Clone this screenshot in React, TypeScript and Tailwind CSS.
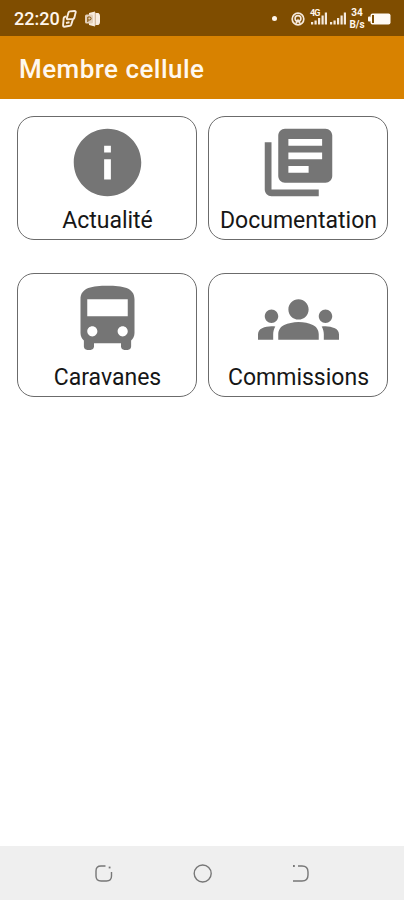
import type { IconType } from 'react-icons';
import { MdInfo, MdLibraryBooks, MdDirectionsBus, MdGroups } from 'react-icons/md';

const cards: { label: string; icon: IconType }[] = [
  { label: 'Actualité', icon: MdInfo },
  { label: 'Documentation', icon: MdLibraryBooks },
  { label: 'Caravanes', icon: MdDirectionsBus },
  { label: 'Commissions', icon: MdGroups },
];

function Signal() {
  return (
    <svg width="16" height="13" viewBox="0 0 16 13" fill="#f5e9dc">
      <rect x="0" y="10" width="2.2" height="2.5" />
      <rect x="3.5" y="8.5" width="2.2" height="4" />
      <rect x="7" y="6" width="2.2" height="6.5" />
      <rect x="10.5" y="3.5" width="2.2" height="9" />
      <rect x="13.8" y="0.5" width="2.2" height="12" />
    </svg>
  );
}

function StatusBar() {
  return (
    <div className="flex h-9 items-center bg-[#7f4d00] pl-[14px] pr-[13px] pt-px text-[#fff6ec]">
      <span className="w-[48px] pt-px text-[18px] font-medium leading-none">22:20</span>
      <svg width="15" height="18" viewBox="0 0 15 18" fill="none" stroke="#f8ecdf" strokeWidth="1.9">
        <path d="M5.5 6 6.5 2.6Q6.800 1.500 8 1.400L12.500 1Q14 1 13.700 2.200L12.400 7.600Q12 8.800 11 8.900L5.800 9.300Q4.600 9.200 4.900 8Z" />
        <path d="M4.300 6.300 2.800 6.800Q1.800 7.200 1.700 8.200L1.100 15Q1 16.800 2.400 16.700L7.800 15.800Q8.800 15.600 9.200 14.600L11 9" />
        <path d="M4 13 7.500 12.300" />
      </svg>
      <svg className="ml-[8px]" width="16" height="16" viewBox="0 0 16 16">
        <path d="M4 2 10 0.5V15.5L4 14Z" fill="#f8ecdf" />
        <path d="M10 2h3.5Q15 3 15 5v6q0 2-1.5 3H10Z" fill="#f8ecdf" />
        <rect x="0" y="3.5" width="8" height="9" rx="1.5" fill="#e3d0bb" />
        <path d="M2.8 11v-5h1.8a1.5 1.5 0 0 1 0 3h-1.8" fill="none" stroke="#7f4d00" />
        <path d="M10.3 1v14" stroke="#b99468" strokeWidth="0.7" />
      </svg>
      <div className="ml-auto flex items-center">
        <span className="mr-[14px] size-[5px] rounded-full bg-[#fff6ec]" />
        <svg className="mr-[6px]" width="14" height="14" viewBox="0 0 14 14" fill="none" stroke="#f5e9dc">
          <circle cx="7" cy="7" r="5.8" strokeWidth="1.7" />
          <circle cx="7" cy="6.5" r="2.9" strokeWidth="1.6" />
          <path d="M5 11.5 7 8l2 3.5" strokeWidth="1.6" />
        </svg>
        <div className="relative mr-[3px]">
          <Signal />
          <span className="absolute -left-px -top-[3px] bg-[#7f4d00] pr-px text-[9px] font-bold leading-[8px] tracking-[-0.8px]">4G</span>
        </div>
        <Signal />
        <div className="ml-[3px] w-[16px] text-center text-[10px] font-bold leading-[12px] tracking-[-0.1px]">
          <div>34</div>
          <div>B/s</div>
        </div>
        <svg className="ml-[3px]" width="23" height="12" viewBox="0 0 23 12" fill="#fffaf4">
          <rect x="0" y="3.5" width="3" height="5" rx="1" />
          <rect x="2.5" y="0.5" width="20" height="11" rx="2" />
          <rect x="4" y="2" width="2" height="8" fill="#7f4d00" />
        </svg>
      </div>
    </div>
  );
}

function MenuCard({ label, icon: Icon }: { label: string; icon: IconType }) {
  return (
    <button className="flex h-[124px] flex-col items-center rounded-[17px] border border-[#6b6b6b] pl-px pt-[5px]">
      <Icon className="size-[81px] shrink-0 text-[#757575]" />
      <span className="mt-[4px] whitespace-nowrap text-[23px] leading-[28px] text-[#161616]">{label}</span>
    </button>
  );
}

function NavBar() {
  return (
    <div className="flex h-[54px] items-center justify-between bg-[#efefef] pl-[94px] pr-[93px] pt-px">
      <svg width="20" height="20" viewBox="0 0 20 20" fill="none" stroke="#777" strokeWidth="1.4">
        <path d="M11.5 2H7Q2 2 2 7V12q0 5 5 5h5.5q5 0 5-5V8" />
        <path d="M14.7 3.5h1.8" strokeWidth="1.8" />
      </svg>
      <svg width="20" height="20" viewBox="0 0 20 20" fill="none" stroke="#777" strokeWidth="1.4">
        <circle cx="9.700" cy="9.5" r="8.5" />
      </svg>
      <svg width="20" height="20" viewBox="0 0 20 20" fill="none" stroke="#777" strokeWidth="1.4">
        <path d="M7 2h4q6 0 6 6v3q0 6-6 6H2" />
        <path d="M2 2h1.8" strokeWidth="1.8" />
      </svg>
    </div>
  );
}

export default function App() {
  return (
    <div className="flex h-[900px] w-[404px] flex-col bg-white font-['Roboto',sans-serif]">
      <StatusBar />
      <header className="flex h-[63px] items-center bg-[#d88200] pl-[19px]">
        <h1 className="mt-[3px] text-[26px] font-medium tracking-[0.45px] text-[#fff8ef]">Membre cellule</h1>
      </header>
      <main className="grid flex-1 grid-cols-2 content-start gap-x-[11px] gap-y-[33px] pl-[17px] pr-[16px] pt-[17px]">
        {cards.map(c => (
          <MenuCard key={c.label} label={c.label} icon={c.icon} />
        ))}
      </main>
      <NavBar />
    </div>
  );
}
